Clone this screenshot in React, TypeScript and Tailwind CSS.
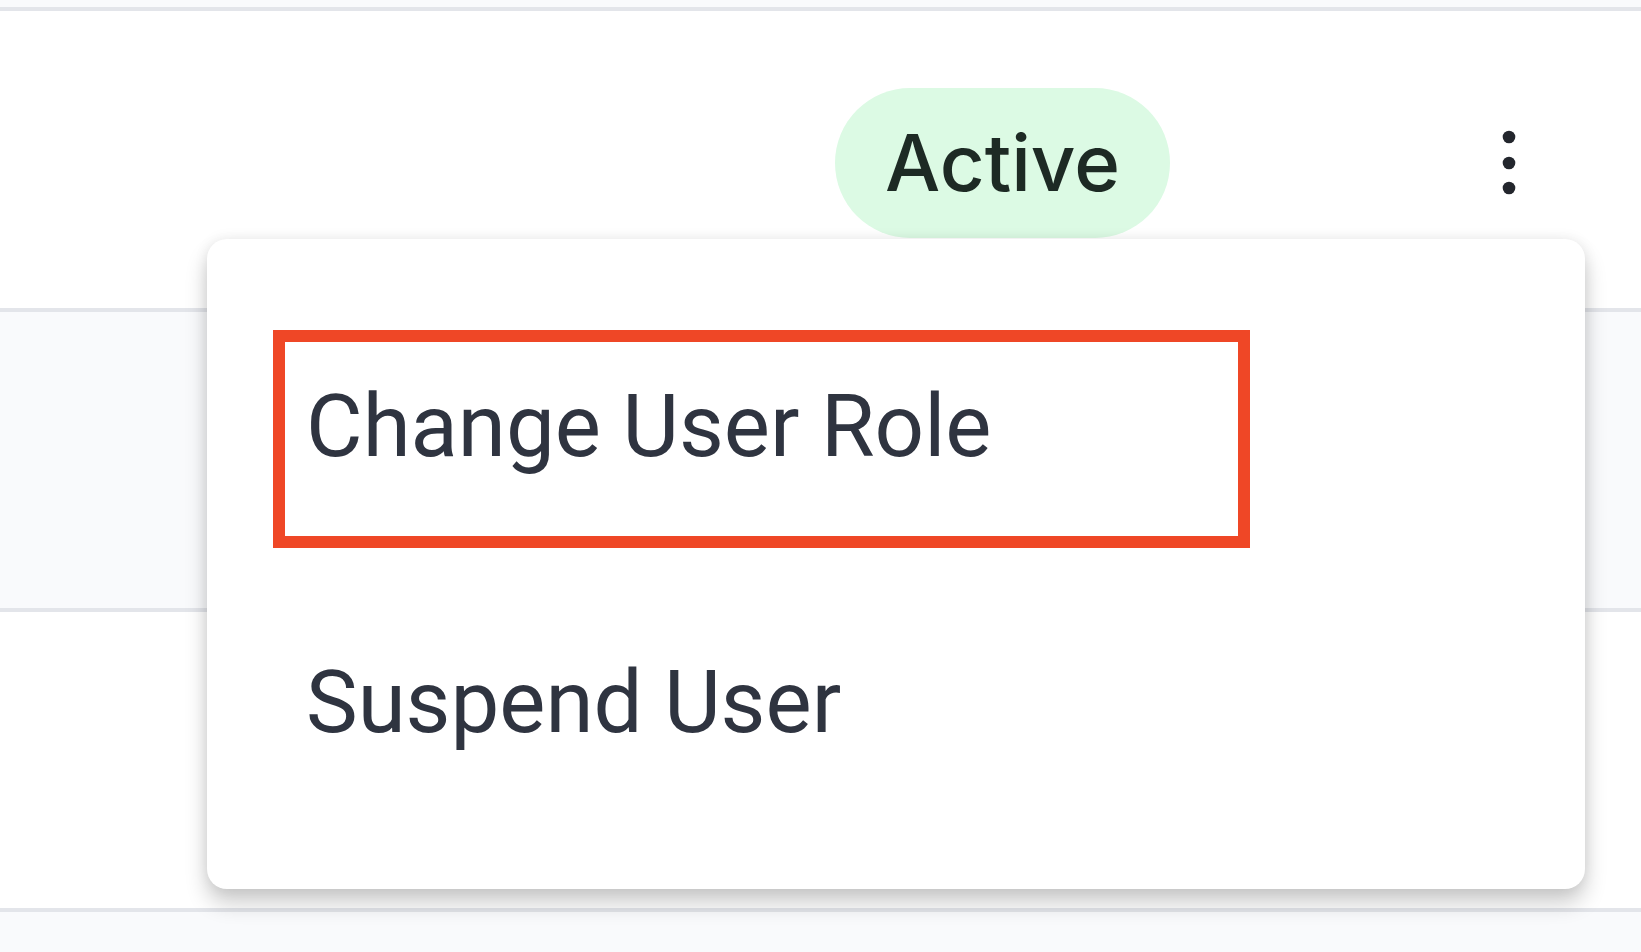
import React from "react";

function Kebab() {
  return (
    <svg width="14" height="66" viewBox="0 0 14 66" className="shrink-0">
      <circle cx="7" cy="7" r="6.3" fill="#23262d" />
      <circle cx="7" cy="33" r="6.3" fill="#23262d" />
      <circle cx="7" cy="58" r="6.3" fill="#23262d" />
    </svg>
  );
}

export default function App() {
  return (
    <div
      className="relative w-[1641px] h-[952px] overflow-hidden bg-white"
      style={{ fontFamily: "Inter, 'Liberation Sans', sans-serif" }}
    >
      <div className="flex flex-col">
        <div className="h-[7px] bg-[#f9fafc]" />
        <div className="h-[4px] bg-[#e3e5ea]" />
        <div className="h-[297px] bg-white flex items-center pt-[6px]">
          <div className="ml-[835px] w-[335px] h-[150px] rounded-full bg-[#dcfae4] flex items-center justify-center">
            <span className="text-[78px] leading-none font-medium text-[#1d2a24]">Active</span>
          </div>
          <div className="ml-[332px]">
            <Kebab />
          </div>
        </div>
        <div className="h-[4px] bg-[#e3e5ea]" />
        <div className="h-[296px] bg-[#f9fafc]" />
        <div className="h-[4px] bg-[#e3e5ea]" />
        <div className="h-[296px] bg-white" />
        <div className="h-[4px] bg-[#e3e5ea]" />
        <div className="h-[60px] bg-[#f9fafc]" />
      </div>

      <div
        className="absolute left-[207px] top-[239px] w-[1378px] h-[650px] rounded-[20px] bg-white shadow-[0_14px_22px_rgba(0,0,0,0.2),0_0_14px_rgba(0,0,0,0.08)] pt-[91px] pl-[66px]"
        style={{ fontFamily: "Roboto, 'Liberation Sans', sans-serif" }}
      >
        <div className="w-[977px] h-[218px] border-[12px] border-[#ef4726] pt-[31px] pl-[21px]">
          <div className="text-[87px] leading-[106px] text-[#2f3440]">Change User Role</div>
        </div>
        <div className="mt-[101px] pl-[33px] text-[87px] leading-[106px] text-[#2f3440]">Suspend User</div>
      </div>
    </div>
  );
}
